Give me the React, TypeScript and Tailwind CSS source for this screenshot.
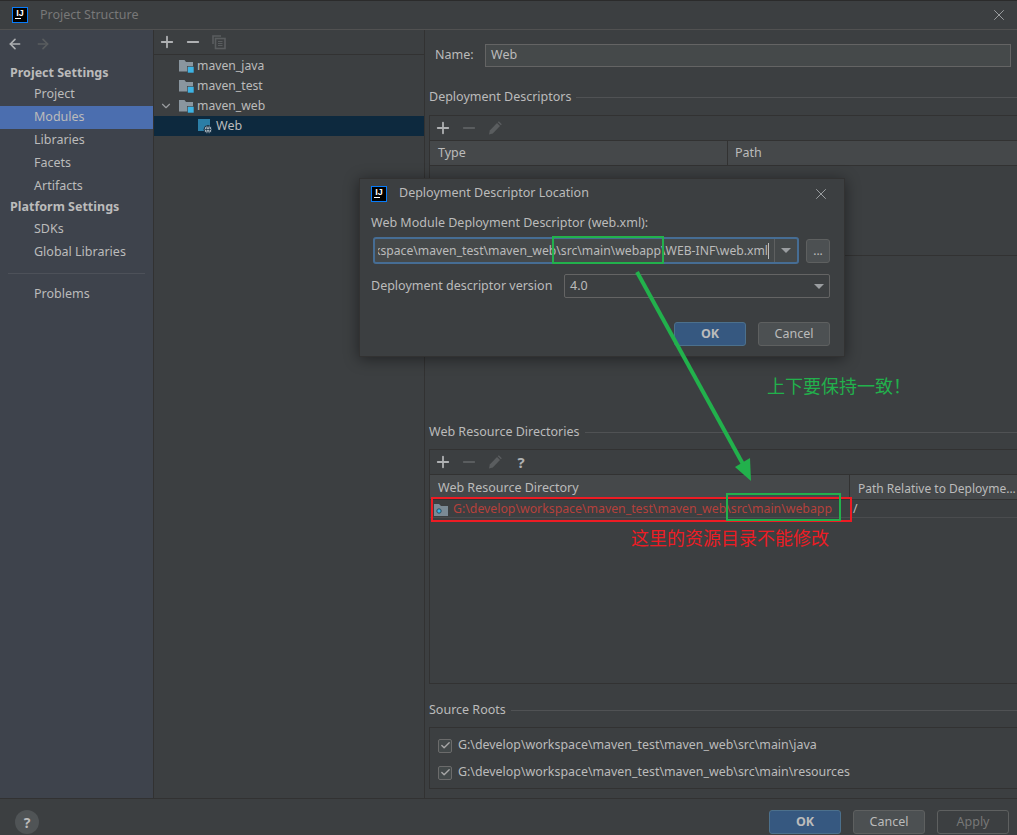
import React from "react";
import { ChevronDown, Minus, Plus, X, ArrowLeft, ArrowRight, Check } from "lucide-react";

const FONT = "font-['Noto_Sans','Noto_Sans_CJK_SC',sans-serif]";

const IdeaLogo = () => (
  <div className="w-[16px] h-[16px] bg-black border border-[#087cfa] flex flex-col items-center justify-start pt-[1px]">
    <span className="text-white font-bold text-[9px] leading-[8px] font-['Liberation_Sans',sans-serif]">IJ</span>
    <span className="w-[6px] h-[1px] bg-white mt-[1px] self-start ml-[2px]" />
  </div>
);

const ModuleIcon = () => (
  <svg width="16" height="16" viewBox="0 0 16 16" className="shrink-0">
    <path d="M0 2h5.5l1.5 2h7v9.5H0z" fill="#8a969f" />
    <rect x="8.5" y="8.5" width="6.5" height="6.5" fill="#3db3e3" stroke="#3c3f41" strokeWidth="0.6" />
  </svg>
);

const WebIcon = () => (
  <svg width="15" height="15" viewBox="0 0 15 15" className="shrink-0">
    <rect x="0" y="0" width="12" height="12" fill="#2b7ea6" />
    <circle cx="10" cy="10.5" r="4" fill="#aab4bc" stroke="#0d293e" strokeWidth="1" />
    <path d="M6.5 10.5h7M10 7c-2 2-2 5 0 7M10 7c2 2 2 5 0 7" stroke="#0d293e" strokeWidth="0.7" fill="none" />
  </svg>
);

const CopyIcon = () => (
  <svg width="18" height="18" viewBox="0 0 18 18" className="shrink-0">
    <path d="M3 11V3h8" stroke="#5a5d5f" strokeWidth="1.6" fill="none" />
    <rect x="5.5" y="5.5" width="9.5" height="10" fill="none" stroke="#5a5d5f" strokeWidth="1.6" />
    <path d="M8 8.5h4.5M8 10.5h4.5M8 12.5h4.5" stroke="#5a5d5f" strokeWidth="1" />
  </svg>
);

const PencilIcon = () => (
  <svg width="18" height="18" viewBox="0 0 18 18" className="shrink-0">
    <path d="M3 15.5l.8-4L11 4l3 3-7.2 7.6z" fill="#5a5d5f" />
    <path d="M11.8 3.2l1-1 3 3-1 1z" fill="#5a5d5f" />
  </svg>
);

const SideItem = ({ label, active }: { label: string; active?: boolean }) => (
  <div className={`h-[23px] pl-[34px] flex items-center text-[12.5px] text-[#bbbbbb] ${active ? "bg-[#4b6eaf]" : ""}`}>
    {label}
  </div>
);

const TreeRow = ({ label, open }: { label: string; open?: boolean }) => (
  <div className="h-[20px] flex items-center pl-[5px] gap-[2px] text-[12.2px] text-[#bbbbbb]">
    <span className="w-[18px] flex items-center justify-start">
      {open && <ChevronDown size={14} className="text-[#9a9da0]" />}
    </span>
    <ModuleIcon />
    <span>{label}</span>
  </div>
);

const SectionTitle = ({ label }: { label: string }) => (
  <div className="flex items-center gap-[5px] text-[12.5px] text-[#bbbbbb] h-[18px]">
    <span className="whitespace-nowrap">{label}</span>
    <span className="flex-1 h-[1px] bg-[#505254]" />
  </div>
);

const TableTools = ({ help }: { help?: boolean }) => (
  <div className="h-[25px] flex items-center gap-[8px] pl-[4px] border-b border-[#323232]">
    <Plus size={18} strokeWidth={2.4} className="text-[#afb1b3]" />
    <Minus size={18} strokeWidth={2.4} className="text-[#5a5d5f]" />
    <PencilIcon />
    {help && <span className="text-[#afb1b3] text-[15px] font-bold leading-none w-[18px] text-center">?</span>}
  </div>
);

const Btn = ({ label, primary, disabled }: { label: string; primary?: boolean; disabled?: boolean }) => (
  <div
    className={`w-[72px] h-[24px] pt-[1px] rounded-[3px] flex items-center justify-center text-[12.5px] border ${
      primary
        ? "bg-[#365880] border-[#4c708c] text-[#bbbbbb] font-bold"
        : disabled
          ? "border-[#5e6060] text-[#777777]"
          : "bg-[#4c5052] border-[#5e6060] text-[#bbbbbb]"
    }`}
  >
    {label}
  </div>
);

const CheckRow = ({ path }: { path: string }) => (
  <div className="flex items-center h-[27px] pl-[8px] gap-[6px] text-[12.4px] text-[#bbbbbb]">
    <span className="w-[14px] h-[14px] rounded-[2px] bg-[#43494a] border border-[#6b6b6b] flex items-center justify-center">
      <Check size={11} strokeWidth={3} className="text-[#a7a7a7]" />
    </span>
    <span>{path}</span>
  </div>
);

const Dialog = () => (
  <div className="absolute left-[359px] top-[178px] w-[486px] h-[179px] bg-[#3c3f41] border border-[#323232] shadow-[0_2px_14px_rgba(0,0,0,0.45)] px-[11px]">
    <div className="h-[29px] flex items-center gap-[12px] -mr-[11px] pr-[14px]">
      <IdeaLogo />
      <span className="text-[12.5px] text-[#bbbbbb] flex-1">Deployment Descriptor Location</span>
      <X size={18} strokeWidth={1.3} className="text-[#9da0a2]" />
    </div>
    <div className="mt-[6px] h-[18px] flex items-center text-[12.5px] text-[#bbbbbb]">Web Module Deployment Descriptor (web.xml):</div>
    <div className="mt-[5px] flex items-center gap-[7px]">
      <div className="ml-[2px] w-[426px] h-[27px] rounded-[3px] border-2 border-[#466d94] bg-[#45494a] flex items-center overflow-hidden">
        <div className="ml-[3px] flex-1 min-w-0 overflow-hidden flex justify-end pr-[5px] text-[12.2px] text-[#bbbbbb] whitespace-nowrap">
          <span className="border-r border-[#bbbbbb] leading-[16px]">G:\develop\workspace\maven_test\maven_web\src\main\webapp\WEB-INF\web.xml</span>
        </div>
        <div className="w-[23px] h-full border-l border-[#5e6060] flex items-center justify-center">
          <span className="w-0 h-0 border-l-[5px] border-r-[5px] border-t-[5px] border-l-transparent border-r-transparent border-t-[#9a9da0]" />
        </div>
      </div>
      <div className="w-[24px] h-[24px] rounded-[3px] bg-[#4c5052] border border-[#5e6060] flex items-center justify-center text-[12px] text-[#bbbbbb]">...</div>
    </div>
    <div className="mt-[10px] flex items-center">
      <span className="w-[192px] text-[12.5px] text-[#bbbbbb] whitespace-nowrap">Deployment descriptor version</span>
      <div className="ml-[1px] w-[266px] h-[24px] rounded-[2px] border border-[#646464] flex items-center justify-between px-[5px] text-[12.5px] text-[#bbbbbb]">
        <span>4.0</span>
        <span className="w-0 h-0 border-l-[5px] border-r-[5px] border-t-[5px] border-l-transparent border-r-transparent border-t-[#9a9da0]" />
      </div>
    </div>
    <div className="mt-[24px] flex justify-end gap-[12px] pr-[3px]">
      <Btn label="OK" primary />
      <Btn label="Cancel" />
    </div>
  </div>
);

const Annotations = () => (
  <>
    <svg className="absolute left-0 top-0 pointer-events-none" width="1017" height="835">
      <line x1="637" y1="272" x2="744" y2="466" stroke="#22b14c" strokeWidth="4" />
      <polygon points="751,481 735,467 750,458" fill="#22b14c" />
    </svg>
    <div className="absolute left-[552px] top-[236px] w-[112px] h-[28px] border-2 border-[#22b14c]" />
    <div className="absolute left-[431px] top-[497px] w-[421px] h-[25px] border-2 border-[#ed1c24]" />
    <div className="absolute left-[726px] top-[493px] w-[115px] h-[28px] border-2 border-[#22b14c]" />
    <div className="absolute left-[767px] top-[375px] text-[18px] leading-[22px] text-[#22b14c] whitespace-nowrap">上下要保持一致！</div>
    <div className="absolute left-[631px] top-[527px] text-[18px] leading-[22px] text-[#ed1c24] whitespace-nowrap">这里的资源目录不能修改</div>
  </>
);

export default function App() {
  return (
    <div className={`relative w-[1017px] h-[835px] overflow-hidden bg-[#3c3f41] flex flex-col ${FONT}`}>
      <div className="h-[30px] shrink-0 flex items-center gap-[12px] pl-[12px] pr-[9px] border-t border-t-[#2b2b2b] border-b border-b-[#515151]">
        <IdeaLogo />
        <span className="text-[12.5px] text-[#787878] flex-1">Project Structure</span>
        <X size={18} strokeWidth={1.3} className="text-[#9da0a2]" />
      </div>

      <div className="flex-1 min-h-0 flex">
        <aside className="w-[154px] shrink-0 bg-[#3e434c] border-r border-[#323232] flex flex-col">
          <div className="h-[31px] pl-[7px] pb-[3px] flex items-center gap-[12px]">
            <ArrowLeft size={16} strokeWidth={2.4} className="text-[#afb1b3]" />
            <ArrowRight size={16} strokeWidth={2.4} className="text-[#5a5d5f]" />
          </div>
          <div className="h-[22px] pl-[10px] pt-[3px] flex items-center text-[12.5px] font-bold text-[#bbbbbb]">Project Settings</div>
          <SideItem label="Project" />
          <SideItem label="Modules" active />
          <SideItem label="Libraries" />
          <SideItem label="Facets" />
          <SideItem label="Artifacts" />
          <div className="h-[20px] pl-[10px] pb-[2px] flex items-center text-[12.5px] font-bold text-[#bbbbbb]">Platform Settings</div>
          <SideItem label="SDKs" />
          <SideItem label="Global Libraries" />
          <div className="mx-[8px] my-[9px] h-[1px] bg-[#4d5159]" />
          <SideItem label="Problems" />
        </aside>

        <section className="w-[271px] shrink-0 border-r border-[#323232] flex flex-col">
          <div className="h-[25px] flex items-center gap-[8px] pl-[4px] border-b border-[#323232]">
            <Plus size={18} strokeWidth={2.4} className="text-[#afb1b3]" />
            <Minus size={18} strokeWidth={2.4} className="text-[#afb1b3]" />
            <CopyIcon />
          </div>
          <div className="pt-[1px]">
            <TreeRow label="maven_java" />
            <TreeRow label="maven_test" />
            <TreeRow label="maven_web" open />
            <div className="h-[20px] bg-[#0d293e] flex items-center pl-[44px] gap-[3px] text-[12.5px] text-[#bbbbbb]">
              <WebIcon />
              <span>Web</span>
            </div>
          </div>
        </section>

        <main className="flex-1 min-w-0 pl-[4px] flex flex-col">
          <div className="h-[24px] mt-[13px] flex items-center pr-[6px]">
            <span className="w-[56px] pl-[6px] text-[12.5px] text-[#bbbbbb]">Name:</span>
            <div className="flex-1 h-[23px] bg-[#45494a] border border-[#646464] flex items-center pl-[5px] text-[12.5px] text-[#bbbbbb]">Web</div>
          </div>
          <div className="mt-[21px]">
            <SectionTitle label="Deployment Descriptors" />
          </div>
          <div className="mt-[9px] h-[141px] border border-[#323232] border-r-0">
            <TableTools />
            <div className="h-[25px] bg-[#45484a] border-b border-[#323232] flex items-center text-[12.5px] text-[#bbbbbb]">
              <span className="w-[298px] shrink-0 pl-[8px] h-full flex items-center border-r border-[#323232]">Type</span>
              <span className="pl-[7px]">Path</span>
            </div>
          </div>
          <div className="mt-[167px]">
            <SectionTitle label="Web Resource Directories" />
          </div>
          <div className="mt-[8px] h-[235px] border border-[#323232] border-r-0">
            <TableTools help />
            <div className="h-[25px] bg-[#45484a] border-b border-[#323232] flex items-center text-[12.5px] text-[#bbbbbb]">
              <span className="w-[420px] shrink-0 pl-[8px] pt-[3px] h-full flex items-center border-r border-[#323232]">Web Resource Directory</span>
              <span className="pl-[8px] pt-[3px] h-full flex items-center text-[12px] whitespace-nowrap">Path Relative to Deployme...</span>
            </div>
            <div className="h-[18px] pt-[2px] border-b border-[#4a4c4e] flex items-center text-[12.3px]">
              <span className="w-[420px] shrink-0 pl-[3px] flex items-center gap-[4px] text-[#b5413c] whitespace-nowrap">
                <svg width="16" height="14" viewBox="0 0 16 14" className="shrink-0">
                  <path d="M1 1h5l2 2h7v10H1z" fill="#7b8a95" />
                  <circle cx="6" cy="8" r="2.2" fill="#3db3e3" stroke="#2b4a5c" />
                </svg>
                G:\develop\workspace\maven_test\maven_web\src\main\webapp
              </span>
              <span className="pl-[3px] text-[#bbbbbb]">/</span>
            </div>
          </div>
          <div className="mt-[17px]">
            <SectionTitle label="Source Roots" />
          </div>
          <div className="mt-[8px] h-[62px] border border-[#323232] border-r-0 pt-[4px]">
            <CheckRow path="G:\develop\workspace\maven_test\maven_web\src\main\java" />
            <CheckRow path="G:\develop\workspace\maven_test\maven_web\src\main\resources" />
          </div>
        </main>
      </div>

      <footer className="h-[37px] shrink-0 border-t border-[#323232] flex items-end pb-[1px] pl-[15px] pr-[8px] gap-[12px]">
        <div className="w-[24px] h-[24px] rounded-full bg-[#505456] flex items-center justify-center text-[14px] font-bold text-[#bbbbbb] mr-auto">?</div>
        <Btn label="OK" primary />
        <Btn label="Cancel" />
        <Btn label="Apply" disabled />
      </footer>

      <Dialog />
      <Annotations />
    </div>
  );
}
